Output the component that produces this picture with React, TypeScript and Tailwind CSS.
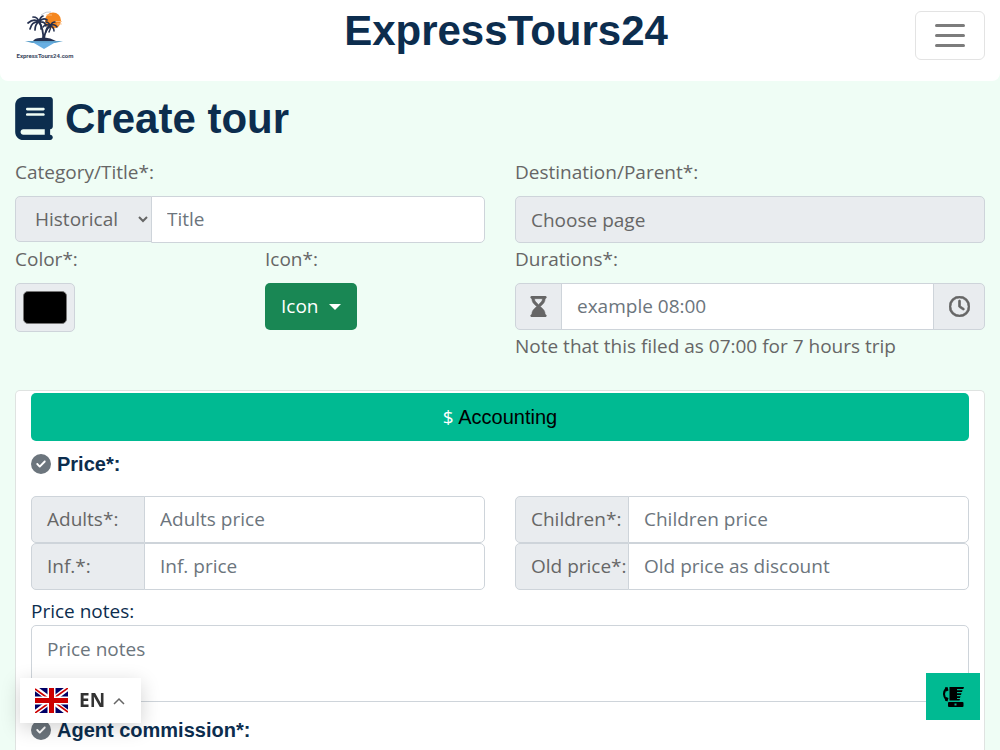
import type { ReactNode } from "react";
import { FaBook, FaCircleCheck, FaHourglassEnd, FaRegClock } from "react-icons/fa6";

interface PriceFieldProps {
  id: string;
  label: string;
  placeholder: string;
}

const Logo = () => (
  <svg viewBox="0 0 60 50" className="h-[50px] w-[60px]" aria-hidden="true">
    <circle cx="38" cy="9.500" r="8" fill="#f5871f" />
    <path d="M40 10.500h7M42 13h5M31 4h6" stroke="#fbc48f" strokeWidth="0.8" fill="none" />
    <path d="M26 4q5-4 10-3" stroke="#c9cdd3" strokeWidth="1" fill="none" />
    <g stroke="#25304f" fill="none" strokeLinecap="round">
      <path d="M28 28Q29 19 24 11M29 28Q30 19 35 15" strokeWidth="1.800" />
      <path
        d="M24 11Q19 7 13 12M24 11Q17 10 15 18M24 11Q20 13 20 19M24 11Q27 14 26 18M24 11Q30 10 31 15M24 11Q28 6 32 9M24 11Q23 6 18 6M24 11Q25 6 28 5"
        strokeWidth="1.700"
      />
      <path
        d="M35 15Q31 12 28 16M35 15Q31 16 31 21M35 15Q36 18 34 21M35 15Q39 16 39 20M35 15Q39 12 42 16M35 15Q37 11 40 11M35 15Q34 11 31 11"
        strokeWidth="1.500"
      />
    </g>
    <path d="M18 30Q20 27 25 27Q33 25 41 30z" fill="#25304f" />
    <path d="M10 30H48L40 32H17z" fill="#5c9fca" />
    <path d="M18 31.500H40L29 38z" fill="#69afe3" />
    <text x="30" y="47" textAnchor="middle" fontFamily="Roboto, sans-serif" fontWeight="700" fontSize="6" fill="#3a4760">
      ExpressTours24.com
    </text>
  </svg>
);

const Flag = () => (
  <svg viewBox="0 0 33 25" className="h-[25px] w-[33px]" aria-hidden="true">
    <path d="M0 0h33v25H0z" fill="#006" />
    <path d="M0 0L33 25M33 0L0 25" stroke="#fff" strokeWidth="5" />
    <path d="M0 1L14 11M33 0L19 10M0 25L14 15M33 24L19 14" stroke="#c00" strokeWidth="1.600" />
    <path d="M16.500 0v25M0 12.500h33" stroke="#fff" strokeWidth="8" />
    <path d="M16.500 0v25M0 12.500h33" stroke="#c00" strokeWidth="5" />
  </svg>
);

const ContactIcon = () => (
  <svg viewBox="0 0 22 20" className="h-5 w-[22px]" aria-hidden="true">
    <path d="M4.500 1Q-0.500 7 4.500 13" stroke="#000" strokeWidth="2" fill="none" />
    <path d="M3 0.500L5.500 0L6.500 3.500L4 4.500zM3 13.500L5.500 14.500L6.500 11L4 10z" />
    <path d="M7.500 0H22L21.300 2H15V3.200H20.500L20 5H15V6.200H19.500L19 8H15V9.200H18.500L18 11H15V12H18L17.500 13.500H7.500z" />
    <path d="M7 15h13.500q1 0 1 1v3q0 1-1 1H7q-1 0-1-1v-3q0-1 1-1z" />
    <rect x="12.500" y="16.500" width="2" height="2" fill="#00ba92" />
  </svg>
);

const SectionTitle = ({ children }: { children: ReactNode }) => (
  <h2 className="flex items-center gap-1.5 font-['Liberation_Sans',sans-serif] text-xl leading-6 font-bold text-[#0c2d4e]">
    <FaCircleCheck className="text-[#6c757d]" />
    {children}
  </h2>
);

const PriceField = ({ id, label, placeholder }: PriceFieldProps) => (
  <div className="flex h-[47px]">
    <label
      htmlFor={id}
      className="flex w-[114px] shrink-0 items-center rounded-l-[5px] border border-[#ced4da] bg-[#e9ecef] pl-[15px] whitespace-nowrap text-[#666]"
    >
      {label}
    </label>
    <input
      id={id}
      placeholder={placeholder}
      className="-ml-px min-w-0 flex-1 rounded-r-[5px] border border-[#ced4da] bg-white px-[15px] placeholder:text-[#6c757d]"
    />
  </div>
);

const App = () => {
  return (
    <div className="flex min-h-screen flex-col bg-[#effdf5] font-['Open_Sans',sans-serif] text-[19px] text-[#666]">
      <header className="flex h-[81px] items-start justify-between rounded-b-lg bg-white px-[15px] pt-[11px]">
        <a href="#" aria-label="ExpressTours24.com" className="w-[82px]">
          <Logo />
        </a>
        <div className="font-['Liberation_Sans',sans-serif] text-[42px] leading-10 font-bold text-[#0c2d4e]">ExpressTours24</div>
        <button
          type="button"
          aria-label="Menu"
          className="flex h-[49px] w-[70px] flex-col items-center justify-center gap-[7px] rounded-md border border-[#e3e3e3]"
        >
          <span className="h-[3px] w-[30px] rounded-sm bg-[#7c7c7c]" />
          <span className="h-[3px] w-[30px] rounded-sm bg-[#7c7c7c]" />
          <span className="h-[3px] w-[30px] rounded-sm bg-[#7c7c7c]" />
        </button>
      </header>

      <main className="flex flex-1 flex-col px-[15px]">
        <h1 className="flex h-[75px] items-center gap-3 font-['Liberation_Sans',sans-serif] text-[42px] leading-none font-bold text-[#0c2d4e]">
          <FaBook className="h-[43px] w-[38px]" />
          Create tour
        </h1>

        <div className="grid grid-cols-2 gap-x-[30px]">
          <div>
            <label htmlFor="title" className="mb-2 block leading-8">Category/Title*:</label>
            <div className="flex h-[47px]">
              <select
                aria-label="Category"
                className="h-[46px] w-[137px] rounded-l-[5px] border border-[#ced4da] bg-[#e9ecef] pl-[15px] text-[#666]"
              >
                <option>Historical</option>
              </select>
              <input
                id="title"
                placeholder="Title"
                className="-ml-px min-w-0 flex-1 rounded-r-[5px] border border-[#ced4da] bg-white px-[15px] placeholder:text-[#6c757d]"
              />
            </div>
          </div>

          <div>
            <label htmlFor="parent" className="mb-2 block leading-8">Destination/Parent*:</label>
            <input
              id="parent"
              readOnly
              placeholder="Choose page"
              className="h-[47px] w-full rounded-[5px] border border-[#ced4da] bg-[#e9ecef] px-[15px] placeholder:text-[#666]"
            />
          </div>

          <div className="grid grid-cols-2 gap-x-[30px]">
            <div>
              <label htmlFor="color" className="mb-2 block leading-8">Color*:</label>
              <input
                id="color"
                type="color"
                defaultValue="#000000"
                className="block h-[49px] w-[60px] rounded-[5px] border border-[#ced4da] bg-[#e9ecef] p-[7px] [&::-webkit-color-swatch]:rounded-[5px] [&::-webkit-color-swatch]:border-[#777] [&::-webkit-color-swatch-wrapper]:p-0"
              />
            </div>
            <div>
              <label htmlFor="icon" className="mb-2 block leading-8">Icon*:</label>
              <button id="icon" type="button" className="flex h-[47px] items-center gap-2.5 rounded-[5px] bg-[#198754] px-4 text-white">
                Icon
                <span className="border-x-6 border-t-6 border-x-transparent border-t-white" />
              </button>
            </div>
          </div>

          <div>
            <label htmlFor="duration" className="mb-2 block leading-8">Durations*:</label>
            <div className="flex h-[47px]">
              <span className="flex w-[47px] items-center justify-center rounded-l-[5px] border border-[#ced4da] bg-[#e9ecef]">
                <FaHourglassEnd size={21} stroke="currentColor" strokeWidth={14} />
              </span>
              <input
                id="duration"
                placeholder="example 08:00"
                className="-mx-px min-w-0 flex-1 border border-[#ced4da] bg-white px-[15px] placeholder:text-[#6c757d]"
              />
              <span className="flex w-[52px] items-center justify-center rounded-r-[5px] border border-[#ced4da] bg-[#e9ecef]">
                <FaRegClock size={21} stroke="currentColor" strokeWidth={16} />
              </span>
            </div>
            <p className="leading-8">Note that this filed as 07:00 for 7 hours trip</p>
          </div>
        </div>

        <section className="mt-7 flex-1 rounded-t-[5px] border border-b-0 border-[#dfe3e1] bg-white px-[15px] pt-0.5">
          <button
            type="button"
            className="h-12 w-full rounded-[5px] bg-[#00ba92] font-['Liberation_Sans',sans-serif] text-xl text-black"
          >
            <span className="font-['Open_Sans',sans-serif] text-[19px] text-white">$</span> Accounting
          </button>

          <div className="mt-[11px]">
            <SectionTitle>Price*:</SectionTitle>
          </div>
          <div className="mt-5 grid grid-cols-2 gap-x-[30px]">
            <PriceField id="adults" label="Adults*:" placeholder="Adults price" />
            <PriceField id="children" label="Children*:" placeholder="Children price" />
            <PriceField id="infants" label="Inf.*:" placeholder="Inf. price" />
            <PriceField id="old-price" label="Old price*:" placeholder="Old price as discount" />
          </div>

          <label htmlFor="notes" className="mt-[7px] block leading-7 text-[#0c2d4e]">Price notes:</label>
          <textarea
            id="notes"
            placeholder="Price notes"
            className="block h-[77px] w-full resize-none rounded-[5px] border border-[#ced4da] px-[15px] py-2 leading-[30px] placeholder:text-[#6c757d]"
          />

          <div className="mt-4">
            <SectionTitle>Agent commission*:</SectionTitle>
          </div>
        </section>
      </main>

      <button
        type="button"
        className="fixed bottom-[27px] left-5 flex h-[45px] w-[121px] items-center bg-white pl-[15px] font-bold text-[#333] shadow-[0_5px_20px_rgba(0,0,0,0.18)]"
      >
        <Flag />
        <span className="ml-[11px]">EN</span>
        <svg viewBox="0 0 12 8" className="ml-2 h-2 w-3" fill="none" stroke="#666" strokeWidth="1.500" aria-hidden="true">
          <path d="M1 7l5-5 5 5" />
        </svg>
      </button>

      <button
        type="button"
        aria-label="Contact"
        className="fixed right-5 bottom-[30px] flex h-[47px] w-[54px] items-center justify-center bg-[#00ba92]"
      >
        <ContactIcon />
      </button>
    </div>
  );
};

export default App;
